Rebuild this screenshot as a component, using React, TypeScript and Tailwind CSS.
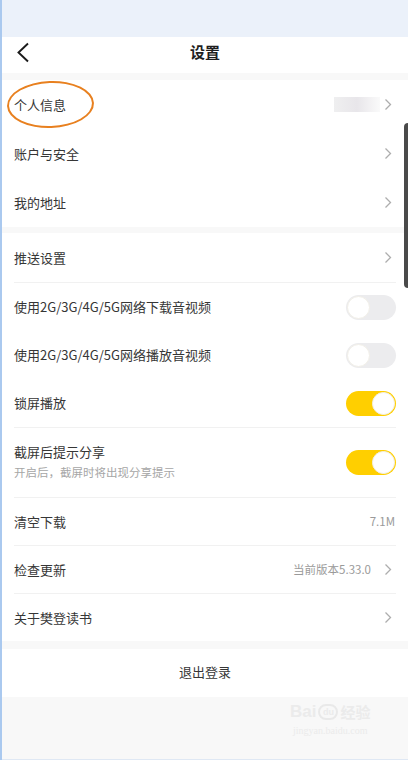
import React from 'react'

const font = { fontFamily: '"Noto Sans CJK SC", "Noto Sans", sans-serif' }

function Chevron() {
  return (
    <svg width="8" height="13" viewBox="0 0 8 13" className="shrink-0 mr-[4px]">
      <polyline points="1.5,1.5 6.5,6.5 1.5,11.5" fill="none" stroke="#adadad" strokeWidth="1.3" />
    </svg>
  )
}

function Toggle({ on }: { on: boolean }) {
  return (
    <div
      className={`w-[50px] h-[25px] rounded-full p-px flex items-center ${
        on ? 'bg-[#ffcf00] justify-end' : 'bg-[#ececee] justify-start'
      }`}
    >
      <div className="w-[23px] h-[23px] rounded-full bg-white border border-[#f1efe8]" />
    </div>
  )
}

interface RowProps {
  label: string
  right?: React.ReactNode
  divider?: boolean
  tall?: boolean
}

function Row({ label, right, divider, tall }: RowProps) {
  return (
    <div
      className={`${tall ? 'h-[49px]' : 'h-[48px]'} mx-3 flex items-center justify-between ${
        divider ? 'border-t border-[#f1f1f1]' : ''
      }`}
    >
      <span className="text-[13px] text-[#363636]">{label}</span>
      {right}
    </div>
  )
}

export default function App() {
  return (
    <div style={font} className="relative w-[408px] h-[760px] overflow-hidden bg-[#f8f8f8] border-l-2 border-[#aac9ef] flex flex-col">
      {/* status bar */}
      <div className="h-[37px] bg-[#ebf1fa] shrink-0" />

      {/* header */}
      <div className="h-[36px] bg-white relative flex justify-center pt-[4px] shrink-0">
        <svg width="14" height="21" viewBox="0 0 14 21" className="absolute left-[14px] top-[5px]">
          <polyline points="12,1.5 2.5,10.5 12,19.5" fill="none" stroke="#1a1a1a" strokeWidth="1.9" />
        </svg>
        <span className="text-[15px] leading-[22px] font-bold text-[#1e1e1e]">设置</span>
      </div>

      <div className="h-[7px] bg-[#f8f8f8] shrink-0" />

      {/* group 1 */}
      <div className="bg-white shrink-0">
        <Row
          tall
          label="个人信息"
          right={
            <div className="flex items-center gap-[4px]">
              <div className="w-[46px] h-[15px] bg-gradient-to-r from-[#efeff0] via-[#e8e6ea] to-[#fafafa]" />
              <Chevron />
            </div>
          }
        />
        <Row tall label="账户与安全" right={<Chevron />} />
        <Row tall label="我的地址" right={<Chevron />} />
      </div>

      <div className="h-[6px] bg-[#f8f8f8] shrink-0" />

      {/* group 2 */}
      <div className="bg-white shrink-0">
        <Row tall label="推送设置" right={<Chevron />} />
        <div className="mx-3 border-t border-[#f1f1f1]">
          <div className="h-[48px] flex items-center justify-between">
            <span className="text-[13px] text-[#363636]">使用2G/3G/4G/5G网络下载音视频</span>
            <Toggle on={false} />
          </div>
          <div className="h-[48px] flex items-center justify-between">
            <span className="text-[13px] text-[#363636]">使用2G/3G/4G/5G网络播放音视频</span>
            <Toggle on={false} />
          </div>
          <div className="h-[48px] flex items-center justify-between">
            <span className="text-[13px] text-[#363636]">锁屏播放</span>
            <Toggle on />
          </div>
        </div>
        <div className="mx-3 h-[70px] border-t border-[#f1f1f1] flex items-center justify-between">
          <div className="flex flex-col -mt-[2px]">
            <span className="text-[13px] text-[#363636] leading-[18px]">截屏后提示分享</span>
            <span className="text-[11.5px] text-[#a6a6a6] leading-[16px] mt-[3px]">开启后，截屏时将出现分享提示</span>
          </div>
          <Toggle on />
        </div>
        <Row label="清空下载" divider right={<span className="text-[11.5px] text-[#9a9a9a] mr-[1px]">7.1M</span>} />
        <Row
          label="检查更新"
          divider
          right={
            <div className="flex items-center gap-[13px]">
              <span className="text-[11.5px] text-[#9a9a9a]">当前版本5.33.0</span>
              <Chevron />
            </div>
          }
        />
        <Row label="关于樊登读书" divider right={<Chevron />} />
      </div>

      <div className="h-[8px] bg-[#f8f8f8] shrink-0" />

      <div className="h-[48px] bg-white flex items-center justify-center shrink-0">
        <span className="text-[13px] text-[#363636] -mt-[2px]">退出登录</span>
      </div>

      <div className="flex-1 bg-[#f8f8f8] border-b border-[#dfe8f4]" />

      {/* annotation ellipse */}
      <div className="absolute left-[5px] top-[81px] w-[87px] h-[47px] rounded-[50%] border-2 border-[#e8801f] -rotate-2" />

      {/* scrollbar */}
      <div className="absolute right-0 top-[123px] w-[4px] h-[165px] rounded-l-full bg-[#4a4a4a]" />

      {/* watermark */}
      <div className="absolute left-[288px] top-[702px] flex flex-col items-center text-[#ebebeb]">
        <div className="flex items-center gap-[2px] font-bold text-[17px] leading-[20px]" style={{ fontFamily: '"Liberation Sans", sans-serif' }}>
          <span>Bai</span>
          <span className="w-[20px] h-[16px] rounded-full border-2 border-[#e9e9e9] text-[9px] leading-[12px] text-center">du</span>
          <span className="text-[15px]" style={font}>经验</span>
        </div>
        <span className="text-[10px] leading-[14px] mt-[2px]" style={{ fontFamily: '"Liberation Serif", serif' }}>jingyan.baidu.com</span>
      </div>
    </div>
  )
}
